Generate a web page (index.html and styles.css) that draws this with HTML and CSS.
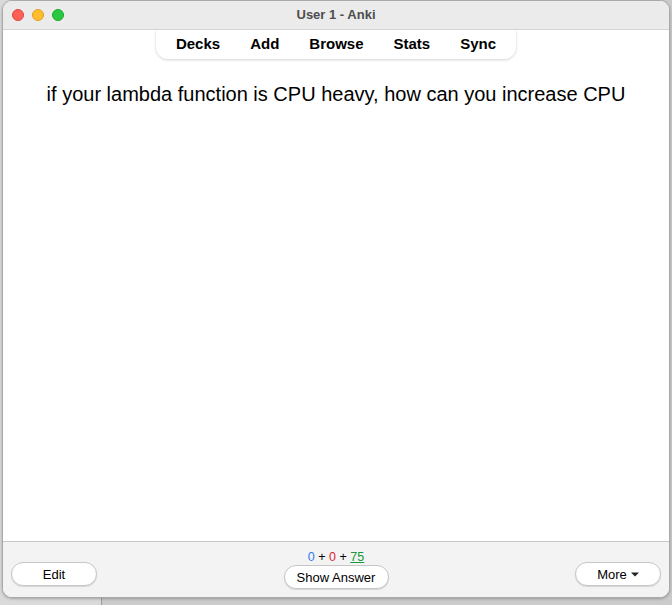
FILE: index.html
```html
<!DOCTYPE html>
<html>
<head>
<meta charset="utf-8">
<title>User 1 - Anki</title>
<link rel="stylesheet" href="styles.css">
</head>
<body>
<div class="desktop">
  <div class="window">
    <div class="titlebar">
      <div class="lights">
        <span class="light red"></span>
        <span class="light yellow"></span>
        <span class="light green"></span>
      </div>
      <div class="title">User 1 - Anki</div>
    </div>
    <div class="content">
      <nav class="topnav">
        <a class="navitem">Decks</a>
        <a class="navitem">Add</a>
        <a class="navitem">Browse</a>
        <a class="navitem">Stats</a>
        <a class="navitem">Sync</a>
      </nav>
      <div class="question">if your lambda function is CPU heavy, how can you increase CPU</div>
    </div>
    <div class="footer">
      <div class="fcol left"><button class="btn btn-edit">Edit</button></div>
      <div class="fcol center">
        <div class="counts"><span class="c-new">0</span> + <span class="c-learn">0</span> + <span class="c-review">75</span></div>
        <button class="btn btn-answer">Show Answer</button>
      </div>
      <div class="fcol right"><button class="btn btn-more">More <svg class="caret" width="8" height="5" viewBox="0 0 8 5"><path d="M0 0.5 L8 0.5 L4 4.5 Z" fill="#222"/></svg></button></div>
    </div>
  </div>
</div>
</body>
</html>
```

FILE: styles.css
```css
html, body {
  margin: 0;
  padding: 0;
}
body {
  width: 672px;
  height: 605px;
  overflow: hidden;
  font-family: "Liberation Sans", Arial, sans-serif;
}
.desktop {
  box-sizing: border-box;
  height: 605px;
  padding: 0 2px 7px 2px;
  background: linear-gradient(to right, #dadada 0, #dadada 101px, #9c9c9c 101px, #9c9c9c 102px, #cbcbcb 102px);
  display: flex;
}
.window {
  flex: 1;
  display: flex;
  flex-direction: column;
  border: 1px solid #a9a9a9;
  border-radius: 10px;
  overflow: hidden;
  background: #fff;
  box-shadow: 0 1px 3px rgba(0,0,0,0.25);
}
.titlebar {
  height: 28px;
  flex: none;
  background: #ebebeb;
  border-bottom: 1px solid #d4d4d4;
  display: flex;
  align-items: center;
  position: relative;
}
.lights {
  display: flex;
  gap: 8px;
  padding-left: 9px;
}
.light {
  width: 12px;
  height: 12px;
  border-radius: 50%;
  box-sizing: border-box;
}
.light.red { background: #fe5f57; border: 0.5px solid #e0443e; }
.light.yellow { background: #febc2e; border: 0.5px solid #dea123; }
.light.green { background: #28c840; border: 0.5px solid #1aab29; }
.title {
  position: absolute;
  left: 0;
  right: 0;
  top: 0;
  line-height: 28px;
  text-align: center;
  font-size: 13px;
  font-weight: bold;
  color: #4d4d4d;
}
.content {
  flex: 1;
  display: flex;
  flex-direction: column;
  align-items: center;
  background: #fff;
}
.topnav {
  display: flex;
  padding: 0 5px;
  height: 29px;
  align-items: center;
  background: #fff;
  border-radius: 0 0 12px 12px;
  box-shadow: 0 1px 3px rgba(0,0,0,0.18);
}
.navitem {
  padding: 0 15px;
  font-size: 15px;
  font-weight: bold;
  color: #000;
  line-height: 18px;
  padding-bottom: 1px;
}
.question {
  margin-top: 24px;
  font-size: 20px;
  color: #000;
  text-align: center;
}
.footer {
  height: 55px;
  flex: none;
  background: #f3f3f3;
  border-top: 1px solid #c9c9c9;
  display: grid;
  grid-template-columns: 1fr auto 1fr;
  padding: 0 8px;
}
.fcol.left { display: flex; align-items: flex-start; padding-top: 20px; }
.fcol.right { display: flex; justify-content: flex-end; align-items: flex-start; padding-top: 20px; }
.fcol.center {
  display: flex;
  flex-direction: column;
  align-items: center;
  padding-top: 8px;
}
.counts {
  font-size: 12.5px;
  line-height: 15px;
  color: #000;
}
.c-new { color: #2f7bf5; }
.c-learn { color: #e0242b; }
.c-review { color: #16993a; text-decoration: underline; }
.btn {
  font-family: "Liberation Sans", Arial, sans-serif;
  font-size: 13px;
  color: #000;
  background: #fff;
  border: 1px solid #c6c6c6;
  border-radius: 12px;
  height: 24px;
  box-shadow: 0 1px 1px rgba(0,0,0,0.12);
  padding: 0;
  display: flex;
  align-items: center;
  justify-content: center;
  gap: 4px;
}
.btn-edit, .btn-more { width: 86px; }
.btn-answer { width: 105px; margin-top: 0; }
.caret { display: block; }
```
